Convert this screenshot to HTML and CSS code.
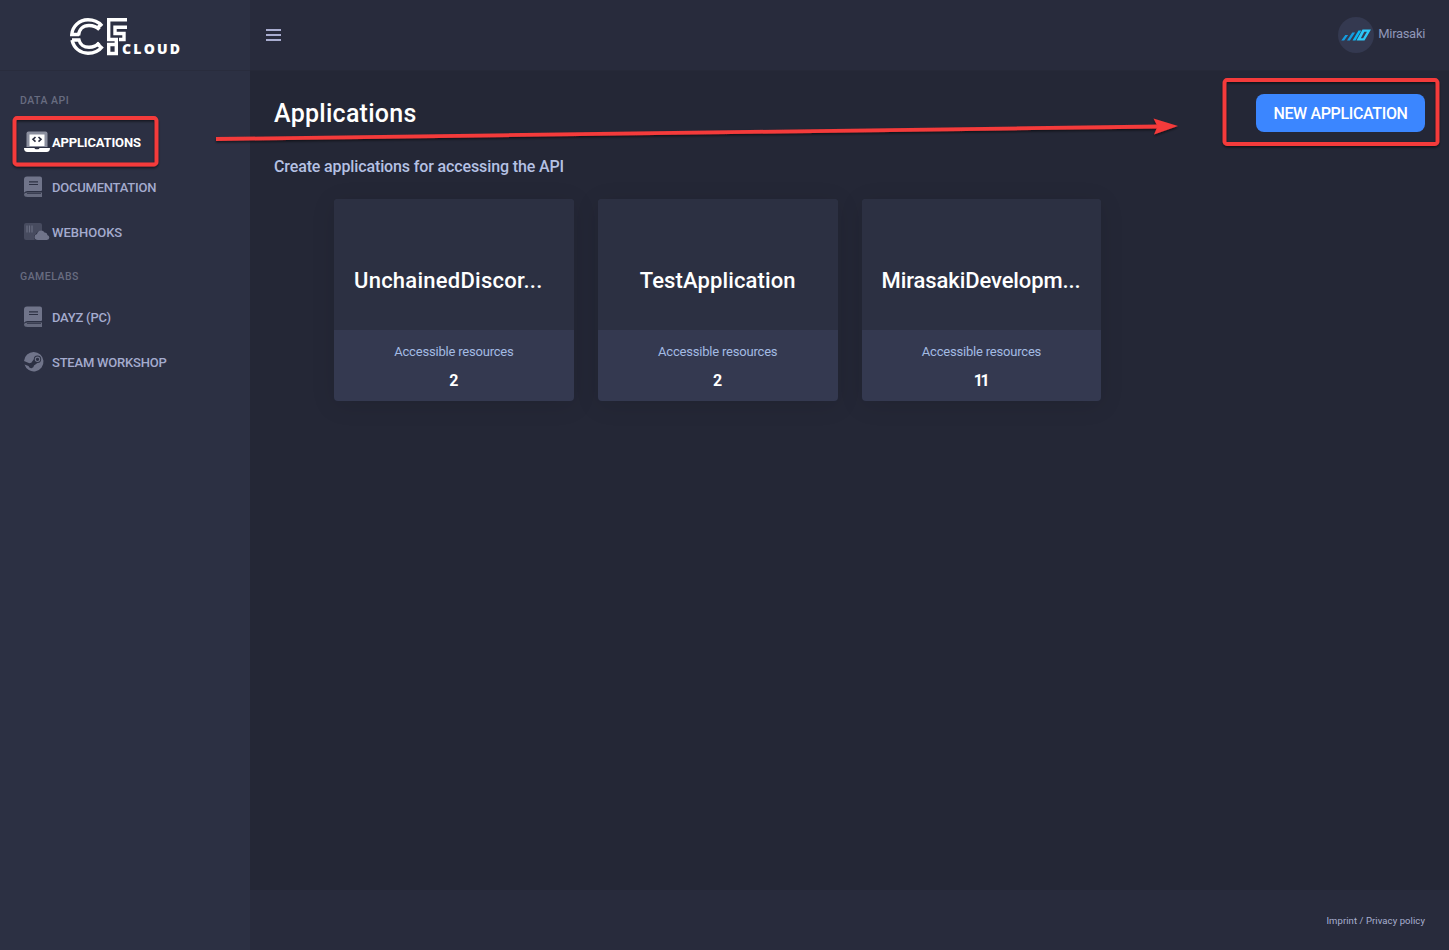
FILE: index.html
```html
<!DOCTYPE html>
<html lang="en">
<head>
<meta charset="utf-8">
<title>Applications</title>
<link rel="stylesheet" href="styles.css">
</head>
<body>
<div class="layout">
  <aside class="sidebar">
    <div class="brand">
      <svg class="mark" width="58" height="39" viewBox="0 0 58 39" fill="none" stroke="#fff" stroke-width="3.4">
        <path d="M32 8.800C28 4.500 23.500 2.800 18 2.800C9 2.800 2.300 9.500 1.800 17.500H9"/>
        <path d="M29.500 12.500C26.500 9.500 23 8.500 19 8.500C13 8.500 9 12.500 8.500 18.500"/>
        <path d="M2 23C4 31.500 10.500 36.200 18 36.200C24 36.200 29 34 32.500 29.500"/>
        <path d="M2 23H9C10 27.500 14 30.300 19 30.300C23 30.300 26.500 29 29.500 26"/>
        <path d="M31.500 7L26.500 12M31.500 31L26.500 26"/>
        <path d="M57 2.700H38.700V22.500H46.300V36.500H38.700V27.500H46M57 10.300H45V16.500H54V22.500H49"/>
      </svg>
      <span class="brand-name">CLOUD</span>
    </div>
    <nav class="nav">
      <h4 class="group">DATA API</h4>
      <a class="item active">
        <svg class="icon" width="26" height="22" viewBox="0 0 26 22"><path fill="#8b8f9f" d="M4.500 0.500h17q2 0 2 2V16h-21V2.500q0-2 2-2z"/><path fill="#fff" d="M5.500 3.500h15V15h-15zM0 17h10.500q.3 1.200 1.500 1.200h2q1.200 0 1.500-1.200H26q0 4-3.500 4h-19Q0 21 0 17z"/><path d="M11.500 6L9 8.300l2.500 2.300M14.500 6L17 8.300l-2.500 2.300" fill="none" stroke="#2c3043" stroke-width="1.600"/></svg>
        <span class="label t-app">APPLICATIONS</span></a>
      <a class="item">
        <svg class="icon" width="26" height="22" viewBox="0 0 26 22"><use href="#book"/></svg>
        <span class="label t-doc">DOCUMENTATION</span></a>
      <a class="item">
        <svg class="icon" width="26" height="22" viewBox="0 0 26 22"><path fill="#474b5f" d="M2 2h14q2 0 2 2v6q-4-1-6 3-2 1-2 3 0 1.500 1 3H2q-2 0-2-2V4q0-2 2-2z"/><path stroke="#6a6e82" stroke-width="1.200" d="M3 4.500v7M5.500 4.500v7M8 4.500v7"/><path fill="#70748a" d="M14 19q-3.500-.2-3.500-3 0-2.300 2.500-3 .8-3.500 4-3.500 2.500 0 3.500 2 2.800 0 2.800 2.600 2 .7 2 2.500 0 2.400-2.500 2.400z"/></svg>
        <span class="label">WEBHOOKS</span></a>
      <h4 class="group second">GAMELABS</h4>
      <a class="item">
        <svg class="icon" width="26" height="22" viewBox="0 0 26 22"><use href="#book"/></svg>
        <span class="label t-doc">DAYZ (PC)</span></a>
      <a class="item">
        <svg class="icon" width="26" height="22" viewBox="0 0 26 22"><path fill="#70748a" d="M9.800 1a9.700 9.700 0 1 1-9.300 12.500l4 1.600a2.800 2.800 0 0 0 5.500-.6l3.400-2.500a3.700 3.700 0 1 0-3.600-3.700L7.300 11.700q-1.200 0-2 .6L0 10A9.700 9.700 0 0 1 9.800 1z"/><circle cx="13.500" cy="8.300" r="2.200" fill="none" stroke="#70748a" stroke-width="1.100"/><path d="M5 13.500l1.700.7" stroke="#2c3043" stroke-width="1"/></svg>
        <span class="label t-ste">STEAM WORKSHOP</span></a>
    </nav>
  </aside>
  <div class="page">
    <header class="topbar">
      <svg class="burger" width="15" height="13" viewBox="0 0 15 13"><path d="M0 1h15M0 6h15M0 11h15" stroke="#a9add0" stroke-width="2"/></svg>
      <div class="user">
        <span class="avatar"><svg width="30" height="12" viewBox="0 0 30 12"><path fill="#149de0" d="M.3 11.500l4-5.500h2.800l-3.900 5.500zM6 11.500l5.300-8h2.800l-5.200 8z"/><path fill="#0bb5f2" d="M11.500 11.500L17.500 1.500h2.800l-5.800 10z"/><path fill="#2cc8f7" fill-rule="evenodd" d="M15.500 11.500L21.500.5H30l-6.500 11zm4.300-2.300h2.300l3.800-6.400h-2.600z"/></svg></span>
        <span class="user-name">Mirasaki</span>
      </div>
    </header>
    <main class="content">
      <div class="heading">
        <h1 class="title">Applications</h1>
        <button class="primary">NEW APPLICATION</button>
      </div>
      <p class="intro">Create applications for accessing the API</p>
      <div class="cards">
        <section class="card"><div class="card-top"><h2 class="card-name n1">UnchainedDiscor...</h2></div><div class="card-bottom"><span class="caption">Accessible resources</span><b class="count">2</b></div></section>
        <section class="card"><div class="card-top"><h2 class="card-name n2">TestApplication</h2></div><div class="card-bottom"><span class="caption">Accessible resources</span><b class="count">2</b></div></section>
        <section class="card"><div class="card-top"><h2 class="card-name n3">MirasakiDevelopm...</h2></div><div class="card-bottom"><span class="caption">Accessible resources</span><b class="count narrow">11</b></div></section>
      </div>
    </main>
    <footer class="footer"><span class="legal">Imprint / Privacy policy</span></footer>
  </div>
</div>
<svg class="marks" width="1449" height="950" viewBox="0 0 1449 950">
  <defs>
    <g id="book"><path fill="#70748a" d="M3 .5h13q2 0 2 2V14q0 1-1 1H3.500q-2.200 0-3.500 1.700V3.500Q0 .5 3 .5z"/><path fill="#666a7e" d="M3.500 16.500H18v4.500H3.500Q0 21 0 18.500 0 16.500 3.500 16.500z"/><path stroke="#2c3043" stroke-width="1.200" d="M5 5.800h9M5 8.500h9"/><path stroke="#3a3e52" d="M3 17.500h14"/></g>
    <filter id="drop" x="0" y="0" width="1449" height="950" filterUnits="userSpaceOnUse"><feDropShadow dx="0" dy="1.500" stdDeviation=".8" flood-color="#000" flood-opacity=".55"/></filter>
  </defs>
  <g filter="url(#drop)" fill="none" stroke="#f43a3a" stroke-width="3.800">
    <rect x="14.500" y="118" width="142" height="46.500" rx="2.500"/>
    <rect x="1224.500" y="80" width="213" height="64" rx="2.500"/>
    <path d="M216 139L1160 126.500"/>
    <path fill="#f43a3a" stroke="none" d="M1178 126l-24.500-7.500 4 8-3.500 8z"/>
  </g>
</svg>
</body>
</html>
```
FILE: styles.css
```css
* { box-sizing: border-box; }
body { margin: 0; background: #242736; font-family: Roboto, sans-serif; color: #fff; overflow: hidden; }
h1, h2, h4, p { margin: 0; font-weight: 500; white-space: nowrap; }
span { white-space: nowrap; }
.layout { display: flex; height: 950px; }
.sidebar { width: 250px; flex: none; background: #2c3043; }
.brand { height: 71px; padding: 17px 0 0 70px; display: flex; border-bottom: 1px solid #292c3d; }
.mark { flex: none; }
.brand-name { font: 800 14px/16px "Open Sans", sans-serif; letter-spacing: 2.200px; margin: 24px 0 0 -6px; }
.nav { display: flex; flex-direction: column; }
.group { margin: 23px 0 0 20px; height: 14px; font-size: 10.500px; line-height: 14px; letter-spacing: .5px; color: #686c80; }
.second { margin-top: 15px; }
.item { display: flex; align-items: center; height: 45px; padding-left: 24px; color: #a4abce; }
.group + .item { margin-top: 12px; }
.second + .item { margin-top: 11px; }
.icon { flex: none; margin: -1px 2px 0 0; }
.label { font-size: 13px; font-weight: 500; line-height: 20px; padding-top: 1px; }
.t-app { letter-spacing: -.17px; }
.t-doc { letter-spacing: -.23px; }
.t-ste { letter-spacing: -.21px; }
.active { color: #fff; }
.active .label { font-weight: 700; }
.page { flex: 1; display: flex; flex-direction: column; }
.topbar { height: 71px; background: #282b3c; border-bottom: 1px solid #262938; display: flex; align-items: center; justify-content: space-between; padding: 0 24px 0 16px; }
.burger { margin-top: 1px; }
.user { display: flex; align-items: center; gap: 4px; }
.avatar { width: 36px; height: 36px; border-radius: 50%; background: #343950; display: flex; align-items: center; justify-content: center; }
.user-name { font-size: 13px; letter-spacing: -.32px; color: #8f96b8; margin-top: -3px; }
.content { flex: 1; padding: 23px 24px 0; }
.heading { display: flex; justify-content: space-between; height: 38px; }
.title { font-size: 25px; line-height: 40px; letter-spacing: .27px; }
.primary { width: 169px; height: 38px; border: 0; border-radius: 8px; padding: 0; background: #3b86ff; color: #fff; font: 500 16px/37px Roboto, sans-serif; letter-spacing: -.35px; white-space: nowrap; }
.intro { font-size: 16px; line-height: 20px; margin-top: 25px; letter-spacing: -.13px; color: #b5c1e4; }
.cards { display: flex; gap: 24px; margin: 22px 0 0 60px; }
.card { width: 239.800px; height: 202px; border-radius: 4px; overflow: hidden; box-shadow: 0 4px 25px rgba(0,0,0,.1); background: #343950; text-align: center; }
.card-top { height: 131px; background: #2c3042; padding: 66px 20px 0; text-align: left; }
.card:nth-child(2) .card-top { text-align: center; }
.card-name { font-size: 22px; line-height: 32px; }
.n1 { letter-spacing: .25px; }
.n2 { letter-spacing: .12px; }
.n3 { letter-spacing: -.1px; }
.card-bottom { padding-top: 13px; display: flex; flex-direction: column; align-items: center; }
.caption { font-size: 13px; line-height: 18px; letter-spacing: -.2px; color: #a3bbe3; }
.count { font-size: 16px; font-weight: 700; line-height: 20px; margin-top: 10px; }
.narrow { letter-spacing: -2.500px; padding-right: 2px; }
.footer { height: 60px; background: #282b3c; display: flex; justify-content: flex-end; align-items: center; padding: 1px 24px 0 0; }
.legal { font-size: 9.500px; letter-spacing: .08px; color: #a9b0d0; }
.marks { position: absolute; left: 0; top: 0; pointer-events: none; }
```
